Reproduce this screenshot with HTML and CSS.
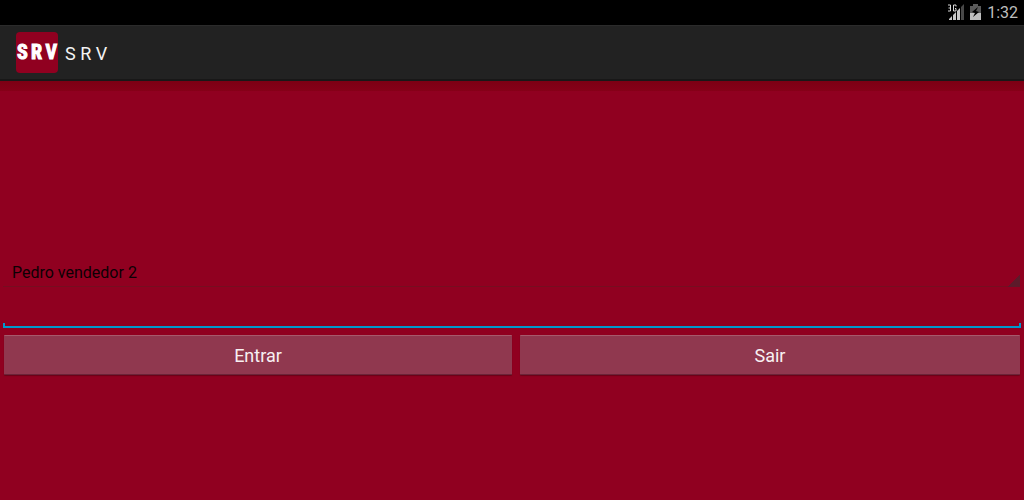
FILE: index.html
```html
<!DOCTYPE html>
<html lang="pt-BR">
<head>
    <meta charset="UTF-8">
    <title>S R V</title>
    <link rel="stylesheet" href="styles.css">
</head>
<body>
    <div class="status-bar">
        <svg class="signal" width="18" height="17" viewBox="0 0 18 17" aria-hidden="true">
            <path d="M1 1h2.500v6H1M1.500 4h2M9 2.500V1H6.500v6H9V4.500H8" fill="none" stroke="#d8d8d8" stroke-width="1"/>
            <path d="M2 16v-1l3-3v4zM6 16v-5l3-3v8zM10 16V7l3-3v12z" fill="#c8c8c8"/>
            <path d="M14 16V3l3-3v16z" fill="#484848"/>
        </svg>
        <svg class="battery" width="11" height="17" viewBox="0 0 11 17" aria-hidden="true">
            <path d="M3 0h5v2h3v7H0V2h3z" fill="#5a5a5a"/>
            <path d="M0 9h11v7H0z" fill="#bebebe"/>
            <path d="M8 3L2 8l3 1-2 4 6-5-3-1z" fill="#000000"/>
        </svg>
        <span class="clock">1:32</span>
    </div>
    <div class="action-bar">
        <div class="logo" aria-hidden="true"><span>S</span><span>R</span><span>V</span></div>
        <h1 class="title">S R V</h1>
    </div>
    <form class="login">
        <select class="login-user" aria-label="Usuário">
            <option>Pedro vendedor 2</option>
        </select>
        <input class="login-password" type="password" aria-label="Senha">
        <div class="login-buttons">
            <button type="submit">Entrar</button>
            <button type="button">Sair</button>
        </div>
    </form>
</body>
</html>
```

FILE: styles.css
```css
* {
    box-sizing: border-box;
}

body {
    display: flex;
    flex-direction: column;
    min-height: 100vh;
    margin: 0;
    background-color: #900020;
    font-family: Roboto, "Liberation Sans", sans-serif;
}

.status-bar {
    display: flex;
    justify-content: flex-end;
    align-items: center;
    height: 25px;
    padding-right: 6px;
    background-color: #000000;
    color: #bebebe;
}

.battery {
    margin: 0 6px 0 5px;
}

.clock {
    font-size: 16px;
    line-height: 25px;
}

.action-bar {
    display: flex;
    align-items: center;
    height: 56px;
    padding-left: 16px;
    background-color: #222222;
    border-top: 1px solid #2b2b2b;
    border-bottom: 2px solid #181818;
}

.logo {
    display: flex;
    justify-content: space-between;
    width: 42px;
    height: 41px;
    padding: 0 1px;
    border-radius: 4px;
    background-color: #900020;
    color: #ffffff;
    font-family: "Roboto Condensed", "Liberation Sans Narrow", "Liberation Sans", sans-serif;
    font-size: 20px;
    font-weight: 700;
    line-height: 41px;
    -webkit-text-stroke: 1px #ffffff;
}

.title {
    margin: 2px 0 0 7px;
    color: #f3f3f3;
    font-size: 18px;
    font-weight: 400;
}

.login {
    flex: 1;
    padding: 179px 3px 0 3px;
    background: linear-gradient(#7c0014, #860018) top / 100% 10px no-repeat;
}

.login-user {
    display: block;
    width: 100%;
    height: 27px;
    padding: 0 9px 2px 9px;
    border: 0;
    outline: none;
    appearance: none;
    background:
        linear-gradient(to bottom right, transparent 50%, #5c1a2a 50%) right 1px bottom / 13px 13px no-repeat,
        linear-gradient(#760e20, #760e20) right 1px bottom / 100% 1px no-repeat;
    color: #0c0004;
    font-family: inherit;
    font-size: 16px;
}

/* underline with short ticks at both ends */
.login-password {
    display: block;
    width: 100%;
    height: 41px;
    padding: 0 9px;
    border: 0;
    outline: none;
    background:
        linear-gradient(#0099cc, #0099cc) left bottom / 100% 2px no-repeat,
        linear-gradient(#0099cc, #0099cc) left bottom / 2px 5px no-repeat,
        linear-gradient(#0099cc, #0099cc) right bottom / 2px 5px no-repeat;
    color: #000000;
    font-size: 18px;
}

.login-buttons {
    display: grid;
    grid-template-columns: 127fr 125fr;
    gap: 8px;
    margin: 7px 1px 0 1px;
}

.login-buttons button {
    height: 40px;
    padding: 0;
    border: 0;
    border-top: 1px solid #a65a6c;
    border-bottom: 1px solid #6b2438;
    border-radius: 1px;
    box-shadow: 0 1px 1px #6c0017;
    background-color: #90384f;
    color: #f8f0f2;
    font-family: inherit;
    font-size: 18px;
}
```
